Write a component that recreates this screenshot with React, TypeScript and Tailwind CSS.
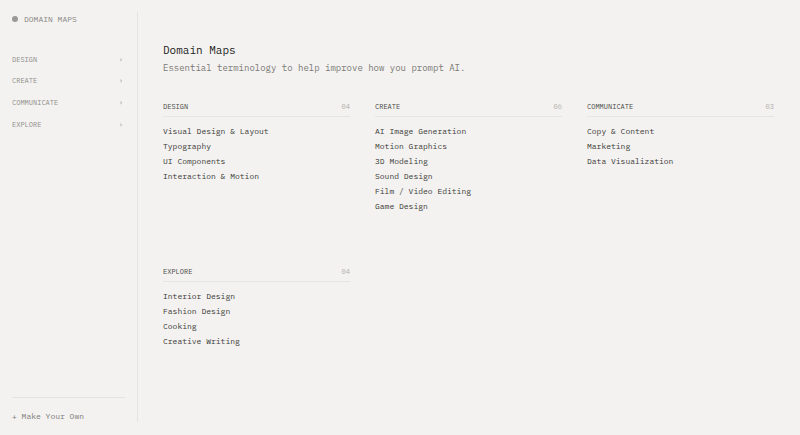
const sections = [
  {
    title: 'DESIGN',
    items: ['Visual Design & Layout', 'Typography', 'UI Components', 'Interaction & Motion'],
  },
  {
    title: 'CREATE',
    items: ['AI Image Generation', 'Motion Graphics', '3D Modeling', 'Sound Design', 'Film / Video Editing', 'Game Design'],
  },
  {
    title: 'COMMUNICATE',
    items: ['Copy & Content', 'Marketing', 'Data Visualization'],
  },
  {
    title: 'EXPLORE',
    items: ['Interior Design', 'Fashion Design', 'Cooking', 'Creative Writing'],
  },
];

const mono = "font-['IBM_Plex_Mono','Liberation_Mono','DejaVu_Sans_Mono',monospace]";

export default function App() {
  return (
    <div className={`flex h-[435px] w-full overflow-hidden bg-[#f3f2f0] ${mono}`}>
      <aside className="mb-[13px] mt-3 flex w-[138px] shrink-0 flex-col border-r border-[#e4e3e0]">
        <div className="flex items-center gap-[6px] pl-3 pt-[1px] text-[8px] leading-[12px] text-[#8a8985]">
          <span className="h-[6px] w-[6px] rounded-full bg-[#9a9995]" />
          <span>DOMAIN MAPS</span>
        </div>
        <nav className="mt-[24px] flex flex-col">
          {sections.map((s) => (
            <div
              key={s.title}
              className="flex h-[21.7px] items-center justify-between pl-3 pr-[14px] text-[7px] text-[#8f8e8a]"
            >
              <span>{s.title}</span>
              <span className="text-[7px] text-[#9a9995]">›</span>
            </div>
          ))}
        </nav>
        <div className="mx-3 mt-auto border-t border-[#e4e3e0] pt-[12px] text-[8px] leading-[12px] text-[#7d7c78]">
          + Make Your Own
        </div>
      </aside>

      <main className="flex-1 pl-[25px] pt-[42px]">
        <h1 className="text-[11px] leading-[16px] text-[#222221]">Domain Maps</h1>
        <p className="mt-[3px] text-[9px] leading-[14px] text-[#7a7975]">
          Essential terminology to help improve how you prompt AI.
        </p>
        <div className="mt-[26px] grid w-[611px] grid-cols-3 gap-x-[25px] gap-y-[52px]">
          {sections.map((s) => (
            <section key={s.title}>
              <div className="flex items-center justify-between border-b border-[#e6e5e2] pb-[3px] text-[7px] leading-[12px]">
                <span className="text-[#4a4946]">{s.title}</span>
                <span className="text-[#b0afab]">{String(s.items.length).padStart(2, '0')}</span>
              </div>
              <ul className="mt-[7px] flex flex-col">
                {s.items.map((item) => (
                  <li key={item} className="text-[8px] leading-[15px] text-[#3a3936]">
                    {item}
                  </li>
                ))}
              </ul>
            </section>
          ))}
        </div>
      </main>
    </div>
  );
}
